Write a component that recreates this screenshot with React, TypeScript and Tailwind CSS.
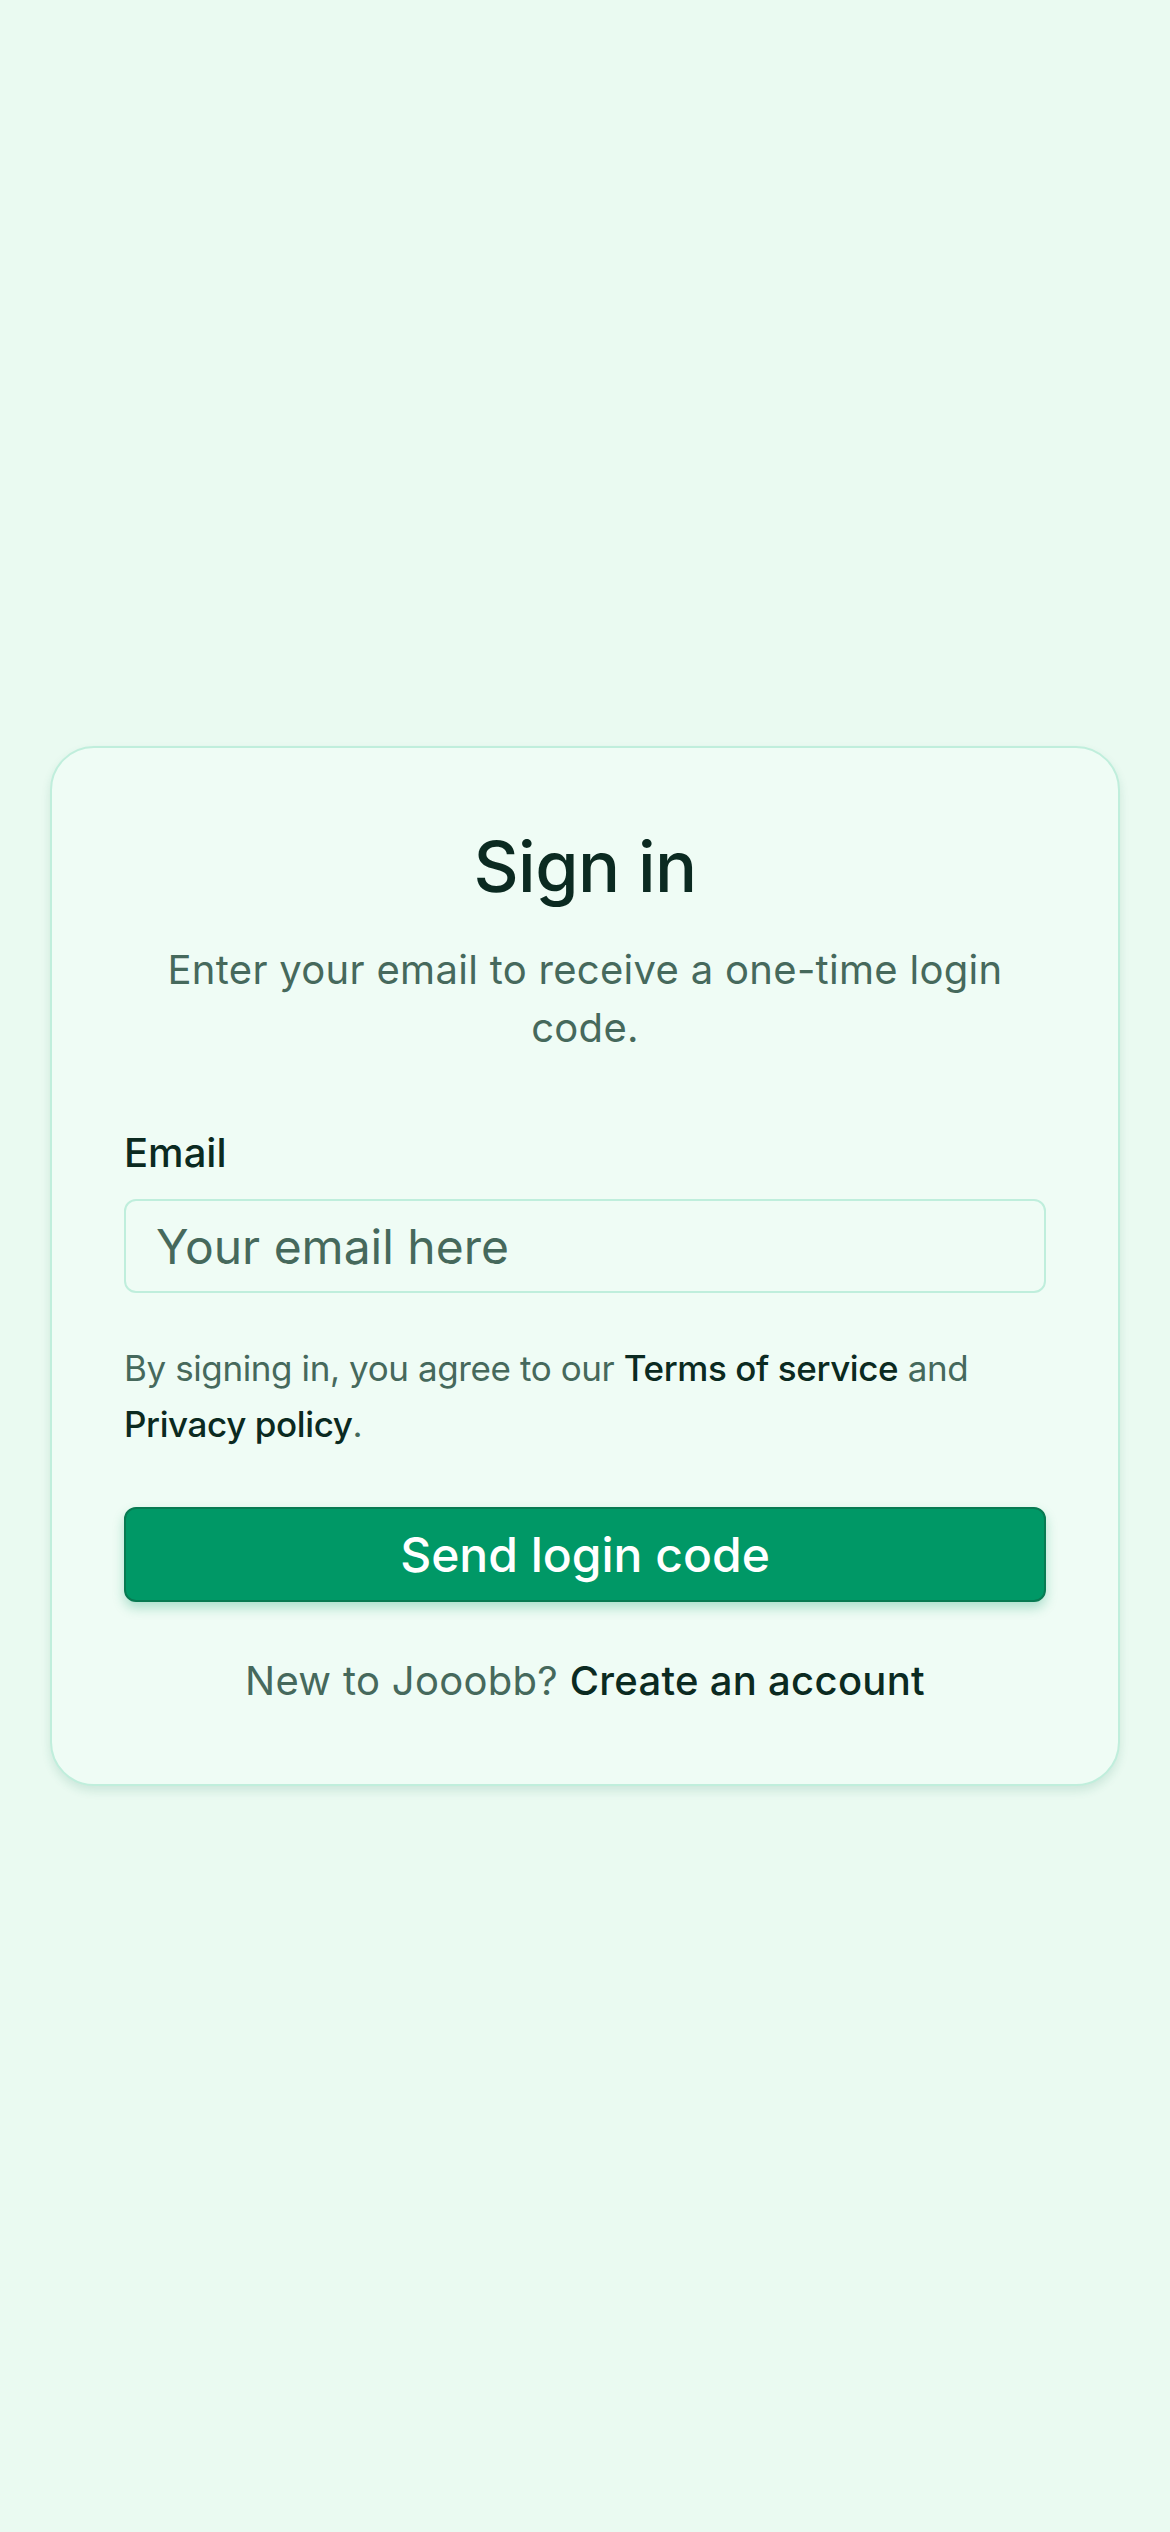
export default function App() {
  return (
    <div
      className="min-h-screen bg-[#eafaf1] flex items-center justify-center px-[50px]"
      style={{ fontFamily: "Inter, 'Noto Sans', sans-serif" }}
    >
      <div className="w-full rounded-[44px] border-2 border-[#c0eedc] bg-[#effcf5] px-[72px] pt-[76px] pb-[75px] shadow-[0_5px_10px_rgba(30,120,90,0.14)]">
        <h1 className="text-center text-[70px] leading-[86px] font-medium text-[#0b2a21] tracking-[-0.5px]">Sign in</h1>
        <p className="mt-[31px] text-center text-[40px] leading-[58px] text-[#46695c] tracking-[0.3px]">
          Enter your email to receive a one-time login code.
        </p>

        <label className="mt-[68px] block text-[40px] leading-[56px] font-medium text-[#0b2a21]">Email</label>
        <input
          type="email"
          placeholder="Your email here"
          className="mt-[18px] block h-[94px] w-full rounded-[12px] border-2 border-[#bfeedc] bg-transparent px-[30px] text-[48px] text-[#0b2a21] placeholder:text-[#46695c] outline-none"
        />

        <p className="mt-[47px] text-[35px] leading-[56px] text-[#46695c] tracking-[-0.4px]">
          By signing in, you agree to our{" "}
          <a className="font-medium text-[#0b2a21]">Terms of service</a> and{" "}
          <a className="font-medium text-[#0b2a21]">Privacy policy</a>.
        </p>

        <button className="mt-[55px] flex h-[95px] w-full items-center justify-center rounded-[12px] border-2 border-[#087a52] bg-[#009866] text-[48px] font-medium text-white shadow-[0_6px_12px_rgba(0,150,100,0.28)]">
          Send login code
        </button>

        <p className="mt-[51px] text-center text-[40px] leading-[56px] text-[#46695c] tracking-[0.3px]">
          New to Jooobb? <a className="font-medium text-[#0b2a21]">Create an account</a>
        </p>
      </div>
    </div>
  );
}
